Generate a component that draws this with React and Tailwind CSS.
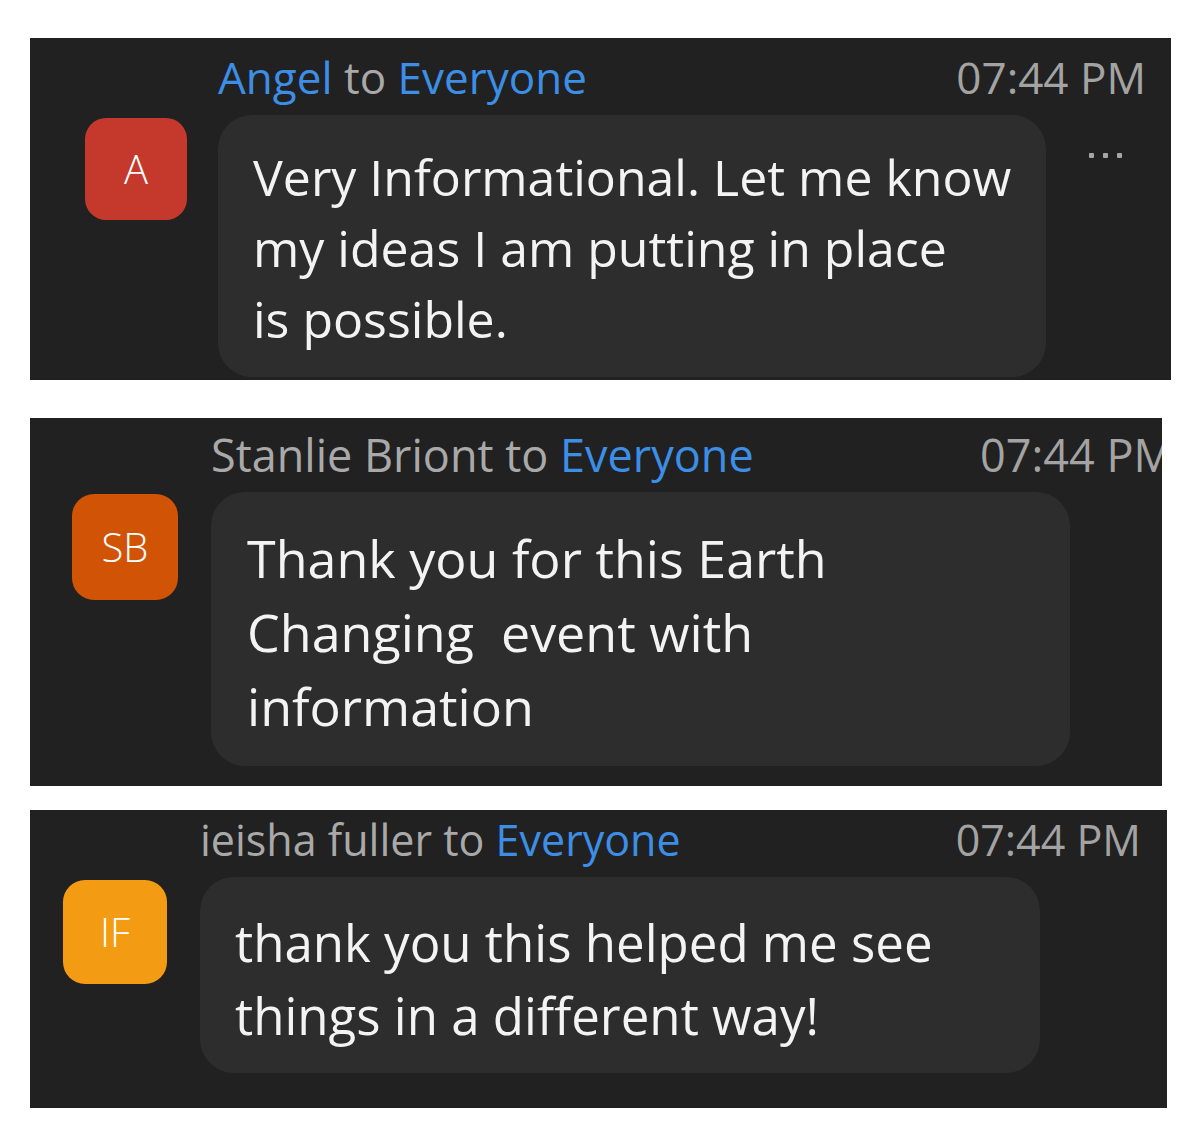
import React from 'react';

const messages = [
  {
    id: 1,
    name: 'Angel',
    nameBlue: true,
    initials: 'A',
    lines: ['Very Informational. Let me know', 'my ideas I am putting in place', 'is possible.'],
    panel: 'w-[1141px] pt-[13px] pb-[3px] pl-[55px] pr-[25px] grid-cols-[101px_1fr] gap-x-[32px]',
    header: 'text-[44px] leading-[53px] mb-[11px]',
    time: '',
    avatar: 'w-[102px] h-[102px] rounded-[21px] bg-[#c4392c] mt-[3px] text-[40px]',
    bubble: 'w-[828px] pt-[27px] pb-[22px] pl-[35px] text-[50px] leading-[71px]',
    more: true,
  },
  {
    id: 2,
    name: 'Stanlie Briont',
    initials: 'SB',
    lines: ['Thank you for this Earth', 'Changing  event with', 'information'],
    panel: 'w-[1132px] pt-[10px] pb-[20px] pl-[42px] pr-0 grid-cols-[106px_1fr] gap-x-[33px]',
    header: 'text-[45px] leading-[54px] mb-[10px]',
    time: 'mr-[-12px]',
    avatar: 'w-[106px] h-[106px] rounded-[22px] bg-[#d15406] mt-[2px] text-[40px]',
    bubble: 'w-[859px] pt-[29px] pb-[23px] pl-[36px] text-[52px] leading-[74px]',
  },
  {
    id: 3,
    name: 'ieisha fuller',
    initials: 'IF',
    lines: ['thank you this helped me see', 'things in a different way!'],
    panel: 'w-[1137px] pt-[4px] pb-[35px] pl-[33px] pr-[26px] grid-cols-[104px_1fr] gap-x-[33px]',
    header: 'text-[43px] leading-[52px] mb-[11px]',
    time: '',
    avatar: 'w-[104px] h-[104px] rounded-[22px] bg-[#f29b13] mt-[3px] text-[40px]',
    bubble: 'w-[840px] pt-[29px] pb-[21px] pl-[35px] text-[51px] leading-[73px]',
  },
];

const ChatMessage = ({ msg }) => {
  return (
    <div className={`grid overflow-hidden bg-[#212121] ${msg.panel}`}>
      <div />
      <div className={`flex justify-between whitespace-nowrap ${msg.header}`}>
        <div>
          <span className={msg.nameBlue ? 'text-[#3c8ee6]' : 'text-[#a9a9a9]'}>{msg.name}</span>
          <span className="text-[#a9a9a9]"> to </span>
          <span className="text-[#3c8ee6]">Everyone</span>
        </div>
        <span className={`text-[#a3a3a3] ${msg.time}`}>07:44 PM</span>
      </div>

      <div className={`flex items-center justify-center font-light text-white ${msg.avatar}`}>
        {msg.initials}
      </div>
      <div className="flex items-start">
        <div className={`rounded-[34px] bg-[#2d2d2d] text-[#f3f3f3] whitespace-pre ${msg.bubble}`}>
          {msg.lines.map((line, i) => (
            <div key={i}>{line}</div>
          ))}
        </div>
        {msg.more && (
          <div className="ml-[43px] mt-[38px] flex gap-[9px]">
            <span className="w-[5px] h-[5px] rounded-[1px] bg-[#a6a6a6]" />
            <span className="w-[5px] h-[5px] rounded-[1px] bg-[#a6a6a6]" />
            <span className="w-[5px] h-[5px] rounded-[1px] bg-[#a6a6a6]" />
          </div>
        )}
      </div>
    </div>
  );
};

const App = () => {
  return (
    <div
      className="min-h-screen bg-white pt-[38px] pl-[30px] flex flex-col"
      style={{ fontFamily: '"Open Sans", "Noto Sans", sans-serif' }}
    >
      <ChatMessage msg={messages[0]} />
      <div className="mt-[38px]">
        <ChatMessage msg={messages[1]} />
      </div>
      <div className="mt-[24px]">
        <ChatMessage msg={messages[2]} />
      </div>
    </div>
  );
};

export default App;
